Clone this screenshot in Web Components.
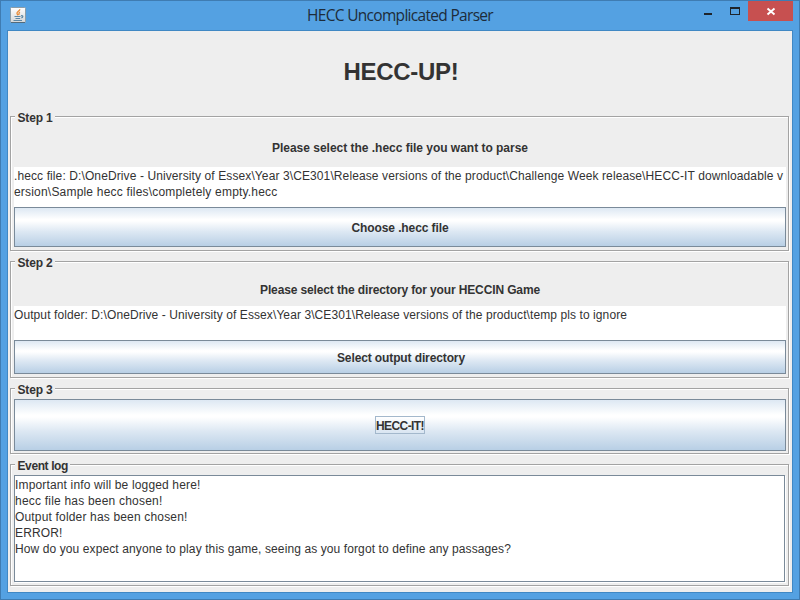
<!DOCTYPE html>
<html lang="en">
<head>
<meta charset="utf-8">
<title>HECC Uncomplicated Parser</title>
<style>
html,body{margin:0;width:800px;height:600px;overflow:hidden}
body{font:12px "Liberation Sans",Arial,sans-serif;color:#333}
main{display:flex;flex-direction:column;gap:9px;padding:0 2px;height:561px;box-sizing:border-box}
h1{margin:0;height:76px;padding:27px 0 0 2px;box-sizing:border-box;font-size:24px;line-height:28px;text-align:center}
.prompt{text-align:center;font-weight:bold;line-height:16px}
.p1{padding:13px 0 11px}
.p2{padding:10px 0 8px}
</style>
</head>
<body>
<app-window>
  <fit-text slot="title" width="186">HECC Uncomplicated Parser</fit-text>
  <main>
    <h1><fit-text width="115">HECC-UP!</fit-text></h1>
    <etched-panel style="--h:136px" label="Step 1" label-width="35">
      <div class="prompt p1"><fit-text width="256">Please select the .hecc file you want to parse</fit-text></div>
      <text-area style="--h:40px"><fit-text width="769">.hecc file: D:\OneDrive - University of Essex\Year 3\CE301\Release versions of the product\Challenge Week release\HECC-IT downloadable v</fit-text><fit-text width="263.5">ersion\Sample hecc files\completely empty.hecc</fit-text></text-area>
      <metal-button style="--h:40px"><fit-text width="97">Choose .hecc file</fit-text></metal-button>
    </etched-panel>
    <etched-panel style="--h:118px" label="Step 2" label-width="35">
      <div class="prompt p2"><fit-text width="280">Please select the directory for your HECCIN Game</fit-text></div>
      <text-area style="--h:34px"><fit-text width="613">Output folder: D:\OneDrive - University of Essex\Year 3\CE301\Release versions of the product\temp pls to ignore</fit-text></text-area>
      <metal-button style="--h:34px;padding-left:2px"><fit-text width="128">Select output directory</fit-text></metal-button>
    </etched-panel>
    <etched-panel style="--h:67px" label="Step 3" label-width="35">
      <metal-button focused style="--h:52px"><fit-text width="48">HECC-IT!</fit-text></metal-button>
    </etched-panel>
    <etched-panel style="--h:123px" label="Event log" label-width="50.5">
      <text-area framed style="--h:108px"><fit-text width="185.5">Important info will be logged here!</fit-text><fit-text width="147.5">hecc file has been chosen!</fit-text><fit-text width="172.5">Output folder has been chosen!</fit-text><fit-text width="47.5">ERROR!</fit-text><fit-text width="496">How do you expect anyone to play this game, seeing as you forgot to define any passages?</fit-text></text-area>
    </etched-panel>
  </main>
</app-window>

<template id="app-window">
  <style>
  :host{display:flex;flex-direction:column;width:800px;height:600px;box-sizing:border-box;border:1px solid #3f7cb2;background:#54a1e2}
  header{display:grid;grid-template-columns:30px 1fr 53px 45px;height:29px;padding-right:6px}
  .icon{padding:6px 0 0 9px}
  .title{padding-left:74px;text-align:center;font:15.5px/29px "Open Sans","Noto Sans",sans-serif;color:#1d2c3a}
  svg{display:block}
  .close{height:20px;background:#c75050}
  .client{height:561px;margin:0 6px 0 6px;border:1px solid #4088c4;background:#eee}
  </style>
  <header>
    <div class="icon"><svg width="16" height="16" viewBox="0 0 16 16"><defs><linearGradient id="g" x2="0" y2="1"><stop stop-color="#fff"/><stop offset="1" stop-color="#d3d6d8"/></linearGradient></defs><rect x=".5" y=".5" width="15" height="15" rx="1" fill="url(#g)" stroke="#8b9da8"/><path d="M1 15.5h14" stroke="#526b7c"/><path d="M9.8 2.2C10 4 6.5 4.8 7 6.5c.2.7.7 1 .8 1.8M10 5C8.2 5.8 9.6 6.7 8.7 8" fill="none" stroke="#e88a35" stroke-width="1.3"/><path d="M4.5 9.5h6M5.5 11.5h4.7M3.5 13.5h8.5M11 8.8c2.5-.6 2.3 1.5.3 2.2" fill="none" stroke="#5c87a5" stroke-width="1.2"/></svg></div>
    <div class="title"><slot name="title"></slot></div>
    <svg width="53" height="29" viewBox="0 0 53 29"><path d="M9 12h8v2H9z" fill="#1e242b"/><path fill-rule="evenodd" d="M35 6h10v8H35zM36 8v5h8V8z" fill="#1e242b"/></svg>
    <div class="close"><svg width="45" height="20" viewBox="0 0 45 20"><path d="M19.5 7.5l7 6M26.5 7.5l-7 6" stroke="#fff" stroke-width="1.9"/></svg></div>
  </header>
  <div class="client"><slot></slot></div>
</template>

<template id="etched-panel">
  <style>
  :host{display:block;position:relative;flex:none;height:var(--h);box-sizing:border-box;padding:11px 4px 0}
  .line{position:absolute;inset:0 1px 1px 0;border:1px solid #a3a3a3;box-shadow:1px 1px #fff,inset 1px 1px #fff}
  .label{position:absolute;left:5px;top:-5px;height:15px;padding:0 2px 0 2.5px;background:#eee;font-weight:bold;line-height:15px}
  .body{position:relative}
  </style>
  <div class="line"></div><div class="label"></div><div class="body"><slot></slot></div>
</template>

<template id="text-area">
  <style>
  :host{display:block;height:var(--h);box-sizing:border-box;background:#fff;line-height:16px;padding-top:1px}
  :host([framed]){border:1px solid #7a8a99;margin-right:1px;height:107px;box-shadow:1px 1px #fff}
  ::slotted(*){display:block!important;width:max-content}
  </style>
  <slot></slot>
</template>

<template id="metal-button">
  <style>
  :host{display:flex;height:var(--h);box-sizing:border-box;align-items:center;justify-content:center;border:1px solid #7a8a99;background:linear-gradient(#dde8f3,#fff 30%,#fff 34%,#dde8f3 62%,#b8cfe5);font-weight:bold;line-height:16px}
  :host([focused]) span{outline:1px solid #a3b8cc}
  span{display:block}
  slot{display:block;padding-top:1px;margin-bottom:-1px}
  </style>
  <span><slot></slot></span>
</template>

<script>
const stamp = el => el.attachShadow({mode:'open'}).append(document.getElementById(el.localName).content.cloneNode(true));

// A single line of text whose tracking is adjusted to a given advance width.
class FitText extends HTMLElement {
  connectedCallback() {
    if (!this.shadowRoot) {
      this.attachShadow({mode:'open'}).innerHTML = '<style>:host{display:inline-block;white-space:pre}span{display:inline-block}</style><span><slot></slot></span>';
    }
    requestAnimationFrame(() => this.fit());
    this.fit();
  }
  fit() {
    const span = this.shadowRoot.querySelector('span');
    span.style.letterSpacing = '0px';
    const natural = span.getBoundingClientRect().width;
    const n = this.textContent.length;
    if (natural) span.style.letterSpacing = (Number(this.getAttribute('width')) - natural) / n + 'px';
  }
}
class AppWindow extends HTMLElement { constructor() { super(); stamp(this); } }
class EtchedPanel extends HTMLElement {
  constructor() {
    super(); stamp(this);
    const t = document.createElement('fit-text');
    t.setAttribute('width', this.getAttribute('label-width'));
    t.textContent = this.getAttribute('label');
    this.shadowRoot.querySelector('.label').append(t);
  }
}
class TextArea extends HTMLElement { constructor() { super(); stamp(this); } }
class MetalButton extends HTMLElement { constructor() { super(); stamp(this); } }
customElements.define('app-window', AppWindow);
customElements.define('etched-panel', EtchedPanel);
customElements.define('text-area', TextArea);
customElements.define('metal-button', MetalButton);
customElements.define('fit-text', FitText);
</script>
</body>
</html>
